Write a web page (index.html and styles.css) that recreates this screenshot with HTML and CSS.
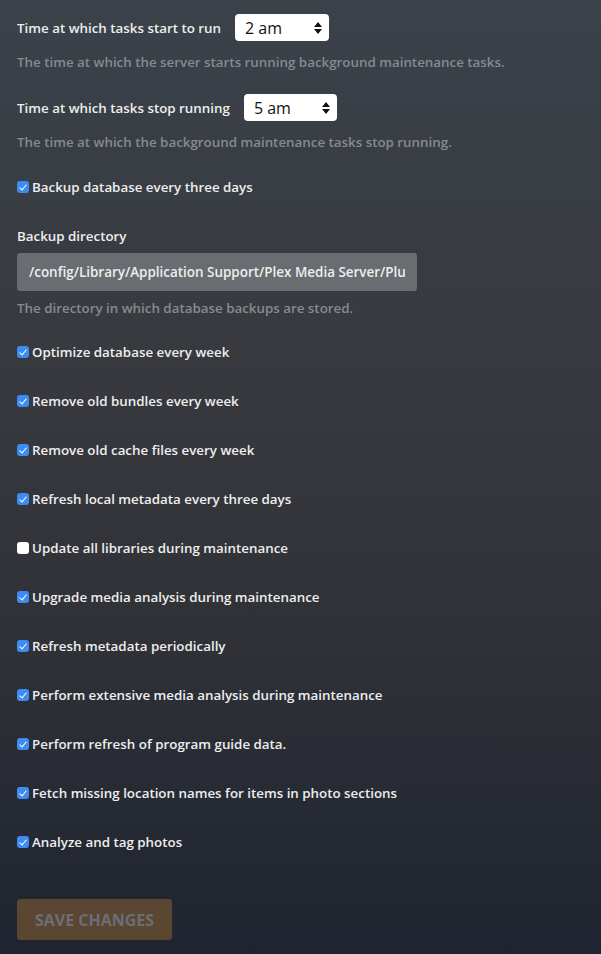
FILE: index.html
```html
<!DOCTYPE html>
<html>
<head>
<meta charset="utf-8">
<link rel="stylesheet" href="styles.css">
</head>
<body>
<form class="settings">
  <div class="group">
    <div class="inline-row">
      <label class="label">Time at which tasks start to run</label>
      <div class="select select-start"><span>2 am</span>
        <svg class="arrows" width="8" height="12" viewBox="0 0 8 12"><path d="M4 0 L8 5 L0 5 Z M0 7 L8 7 L4 12 Z" fill="#111"/></svg>
      </div>
    </div>
    <p class="help">The time at which the server starts running background maintenance tasks.</p>
  </div>
  <div class="group group-tight">
    <div class="inline-row">
      <label class="label">Time at which tasks stop running</label>
      <div class="select select-stop"><span>5 am</span>
        <svg class="arrows" width="8" height="12" viewBox="0 0 8 12"><path d="M4 0 L8 5 L0 5 Z M0 7 L8 7 L4 12 Z" fill="#111"/></svg>
      </div>
    </div>
    <p class="help">The time at which the background maintenance tasks stop running.</p>
  </div>
  <div class="check-row"><span class="box on"></span>Backup database every three days</div>
  <div class="group dir-group">
    <label class="label block">Backup directory</label>
    <div class="text-input"><span class="input-value">/config/Library/Application Support/Plex Media Server/Plu</span></div>
    <p class="help">The directory in which database backups are stored.</p>
  </div>
  <div class="checks">
    <div class="check-row"><span class="box on"></span>Optimize database every week</div>
    <div class="check-row"><span class="box on"></span>Remove old bundles every week</div>
    <div class="check-row"><span class="box on"></span>Remove old cache files every week</div>
    <div class="check-row"><span class="box on"></span>Refresh local metadata every three days</div>
    <div class="check-row"><span class="box"></span>Update all libraries during maintenance</div>
    <div class="check-row"><span class="box on"></span>Upgrade media analysis during maintenance</div>
    <div class="check-row"><span class="box on"></span>Refresh metadata periodically</div>
    <div class="check-row"><span class="box on"></span>Perform extensive media analysis during maintenance</div>
    <div class="check-row"><span class="box on"></span>Perform refresh of program guide data.</div>
    <div class="check-row"><span class="box on"></span>Fetch missing location names for items in photo sections</div>
    <div class="check-row"><span class="box on"></span>Analyze and tag photos</div>
  </div>
  <button type="button" class="save">SAVE CHANGES</button>
</form>
</body>
</html>
```

FILE: styles.css
```css
html, body {
  margin: 0;
  padding: 0;
}
body {
  width: 601px;
  height: 954px;
  overflow: hidden;
  background: linear-gradient(to bottom, #3b424a 0%, #37393e 40%, #303237 65%, #1f2430 100%);
  font-family: "Open Sans", "Liberation Sans", sans-serif;
  font-size: 13.35px;
  line-height: 20px;
  color: #eeeeee;
}
.settings {
  padding: 14px 17px 0 17px;
  display: flex;
  flex-direction: column;
}
.group {
  display: flex;
  flex-direction: column;
}
.group-tight {
  margin-top: 22px;
}
.inline-row {
  display: flex;
  align-items: center;
  gap: 14px;
  height: 27px;
}
.label {
  font-weight: 600;
  color: #eeeeee;
}
.label.block {
  display: block;
}
.select {
  box-sizing: border-box;
  height: 27px;
  background: #ffffff;
  border-radius: 4px;
  display: flex;
  align-items: center;
  justify-content: space-between;
  padding: 0 7px 0 10px;
  color: #111;
  font-size: 16px;
  font-weight: 400;
}
.select-start { width: 94px; }
.select-stop { width: 93px; }
.arrows {
  display: block;
}
.help {
  margin: 11px 0 0 0;
  font-weight: 600;
  color: #888a8e;
}
.check-row {
  display: flex;
  align-items: center;
  font-weight: 600;
  height: 20px;
  color: #eeeeee;
}
.settings > .check-row {
  margin-top: 25px;
}
.box {
  box-sizing: border-box;
  width: 12px;
  height: 12px;
  border-radius: 3px;
  background: #ffffff;
  margin-right: 3px;
  flex: none;
  position: relative;
}
.box.on {
  background: #3d8cf4;
}
.box.on::after {
  content: "";
  position: absolute;
  left: 4px;
  top: 1.5px;
  width: 3px;
  height: 6px;
  border-right: 1.6px solid #fff;
  border-bottom: 1.6px solid #fff;
  transform: rotate(40deg);
}
.dir-group {
  margin-top: 29px;
}
.text-input {
  box-sizing: border-box;
  margin-top: 7px;
  width: 400px;
  height: 38px;
  line-height: 38px;
  padding: 0 12px;
  background: #696c70;
  border-radius: 3px;
  color: #eeeeee;
  font-size: 13.45px;
  font-weight: 600;
  white-space: nowrap;
}
.dir-group .help {
  margin-top: 7px;
}
.checks {
  margin-top: 24px;
  display: flex;
  flex-direction: column;
  gap: 29px;
}
.save {
  align-self: flex-start;
  margin-top: 47px;
  width: 155px;
  height: 41px;
  border: none;
  border-radius: 3px;
  background: #5a4631;
  color: #6b6e76;
  font-family: "Open Sans", "Liberation Sans", sans-serif;
  font-size: 16px;
  font-weight: 700;
  padding: 0;
}
```
